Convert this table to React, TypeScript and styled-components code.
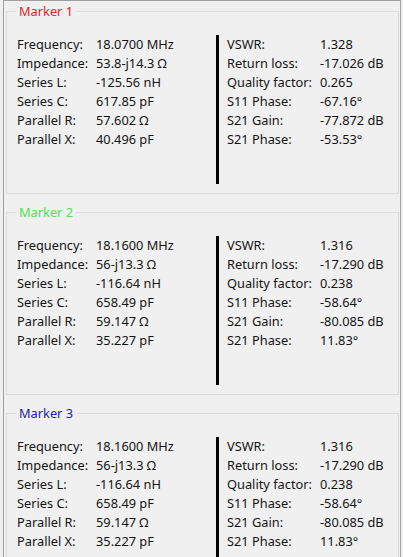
import React from "react";
import styled, { createGlobalStyle } from "styled-components";

const Global = createGlobalStyle`
  html, body { margin: 0; padding: 0; background: #f0f0f0; }
  body { font-family: "Noto Sans", "Open Sans", sans-serif; font-size: 12.8px; color: #141414; }
  * { box-sizing: border-box; }
`;

const Panel = styled.div`
  margin-left: 3px;
  width: 398px;
  height: 580px;
  border: 1px solid #a0a0a0;
  border-bottom: none;
  padding: 1px 1px 0 2px;
  display: flex;
  flex-direction: column;
  gap: 9px;
  overflow: hidden;
`;

const Group = styled.fieldset`
  margin: 0;
  flex: 0 0 auto;
  height: 192px;
  border: 1px solid #dcdcdc;
  padding: 14px 0 0 10px;
  display: flex;
  align-items: flex-start;
  min-width: 0;
`;

const Legend = styled.legend<{ $color: string }>`
  color: ${(p) => p.$color};
  padding: 0 3px;
  margin-left: -1px;
  line-height: 19px;
`;

const Column = styled.div<{ $bar?: boolean; $width: number }>`
  width: ${(p) => p.$width}px;
  height: 149px;
  display: grid;
  grid-template-columns: ${(p) => (p.$bar ? "93px" : "79px")} 1fr;
  grid-auto-rows: 19px;
  align-content: start;
  ${(p) => (p.$bar ? "border-left: 3px solid #000; padding-left: 8px;" : "")}
`;

const Label = styled.span`
  white-space: nowrap;
  line-height: 19px;
`;

const Value = styled.span`
  white-space: nowrap;
  line-height: 19px;
`;

type Row = [string, string];
type Marker = { name: string; color: string; left: Row[]; right: Row[] };

const markers: Marker[] = [
  {
    name: "Marker 1",
    color: "#e02525",
    left: [
      ["Frequency:", "18.0700 MHz"],
      ["Impedance:", "53.8-j14.3 Ω"],
      ["Series L:", "-125.56 nH"],
      ["Series C:", "617.85 pF"],
      ["Parallel R:", "57.602 Ω"],
      ["Parallel X:", "40.496 pF"],
    ],
    right: [
      ["VSWR:", "1.328"],
      ["Return loss:", "-17.026 dB"],
      ["Quality factor:", "0.265"],
      ["S11 Phase:", "-67.16°"],
      ["S21 Gain:", "-77.872 dB"],
      ["S21 Phase:", "-53.53°"],
    ],
  },
  {
    name: "Marker 2",
    color: "#4ce34c",
    left: [
      ["Frequency:", "18.1600 MHz"],
      ["Impedance:", "56-j13.3 Ω"],
      ["Series L:", "-116.64 nH"],
      ["Series C:", "658.49 pF"],
      ["Parallel R:", "59.147 Ω"],
      ["Parallel X:", "35.227 pF"],
    ],
    right: [
      ["VSWR:", "1.316"],
      ["Return loss:", "-17.290 dB"],
      ["Quality factor:", "0.238"],
      ["S11 Phase:", "-58.64°"],
      ["S21 Gain:", "-80.085 dB"],
      ["S21 Phase:", "11.83°"],
    ],
  },
  {
    name: "Marker 3",
    color: "#2020aa",
    left: [
      ["Frequency:", "18.1600 MHz"],
      ["Impedance:", "56-j13.3 Ω"],
      ["Series L:", "-116.64 nH"],
      ["Series C:", "658.49 pF"],
      ["Parallel R:", "59.147 Ω"],
      ["Parallel X:", "35.227 pF"],
    ],
    right: [
      ["VSWR:", "1.316"],
      ["Return loss:", "-17.290 dB"],
      ["Quality factor:", "0.238"],
      ["S11 Phase:", "-58.64°"],
      ["S21 Gain:", "-80.085 dB"],
      ["S21 Phase:", "11.83°"],
    ],
  },
];

function Rows({ rows }: { rows: Row[] }) {
  return (
    <>
      {rows.map(([l, v]) => (
        <React.Fragment key={l}>
          <Label>{l}</Label>
          <Value>{v}</Value>
        </React.Fragment>
      ))}
    </>
  );
}

export default function App() {
  return (
    <>
      <Global />
      <Panel>
        {markers.map((m) => (
          <Group key={m.name}>
            <Legend $color={m.color}>{m.name}</Legend>
            <Column $width={199}>
              <Rows rows={m.left} />
            </Column>
            <Column $bar $width={170}>
              <Rows rows={m.right} />
            </Column>
          </Group>
        ))}
      </Panel>
    </>
  );
}
